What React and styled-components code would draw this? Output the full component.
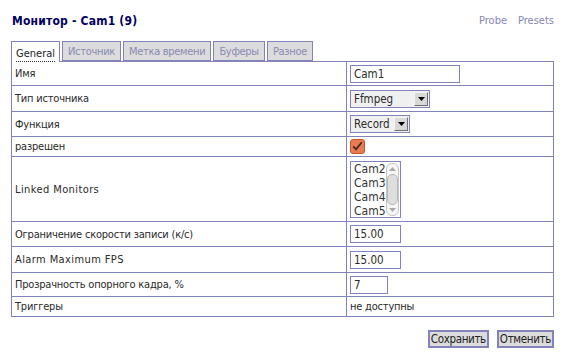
import React from 'react';
import styled, { createGlobalStyle } from 'styled-components';

const line = '#8282bc';
const isCyr = (s) => /[а-яё]/i.test(s);

const GlobalStyle = createGlobalStyle`
	body {
		margin: 0;
		background: white;
		font-family: 'DejaVu Sans Condensed', 'DejaVu Sans', sans-serif;
		font-stretch: condensed;
		font-size: 11px;
		color: #2a2a2a;
	}
`;

const rows = [
	{ label: 'Имя', kind: 'text', value: 'Cam1', width: 110, h: 24 },
	{ label: 'Тип источника', kind: 'select', value: 'Ffmpeg', width: 80, h: 26 },
	{ label: 'Функция', kind: 'select', value: 'Record', width: 60, h: 25 },
	{ label: 'разрешен', kind: 'check', h: 20 },
	{ label: 'Linked Monitors', kind: 'list', h: 65 },
	{ label: 'Ограничение скорости записи (к/с)', kind: 'text', value: '15.00', width: 51, h: 25 },
	{ label: 'Alarm Maximum FPS', kind: 'text', value: '15.00', width: 51, h: 26 },
	{ label: 'Прозрачность опорного кадра, %', kind: 'text', value: '7', width: 38, h: 24 },
	{ label: 'Триггеры', kind: 'plain', value: 'не доступны', h: 20 },
];

const tabs = ['General', 'Источник', 'Метка времени', 'Буферы', 'Разное'];

const Field = ({ row }) => {
	switch (row.kind) {
		case 'text':
			return <TextBox style={{ width: row.width }}>{row.value}</TextBox>;
		case 'select':
			return (
				<SelectBox style={{ width: row.width }}>
					<span>{row.value}</span>
					<Arrow>
						<svg width="7" height="4" viewBox="0 0 7 4">
							<path d="M0 0h7L3.5 4z" fill="#000" />
						</svg>
					</Arrow>
				</SelectBox>
			);
		case 'check':
			return (
				<svg width="15" height="15" viewBox="0 0 15 15">
					<rect x="0.5" y="0.5" width="14" height="14" rx="2.5" fill="#e97a52" stroke="#c4572f" />
					<path d="M3.2 7.3l2.8 3 5.8-7" fill="none" stroke="#4a2a20" strokeWidth="1.8" />
				</svg>
			);
		case 'list':
			return (
				<ListBox>
					<ListItems>
						{['Cam2', 'Cam3', 'Cam4', 'Cam5'].map((c) => (
							<ListItem key={c}>{c}</ListItem>
						))}
					</ListItems>
					<ScrollBar>
						<ScrollBtn>
							<svg width="7" height="4" viewBox="0 0 7 4">
								<path d="M0 4h7L3.5 0z" fill="#a8a8a8" />
							</svg>
						</ScrollBtn>
						<Thumb />
						<ScrollBtn>
							<svg width="7" height="4" viewBox="0 0 7 4">
								<path d="M0 0h7L3.5 4z" fill="#a8a8a8" />
							</svg>
						</ScrollBtn>
					</ScrollBar>
				</ListBox>
			);
		default:
			return <Plain>{row.value}</Plain>;
	}
};

const App = () => (
	<Page>
		<GlobalStyle />
		<Header>
			<Title>Монитор - Cam1 (9)</Title>
			<Links>
				<a>Probe</a>
				<a>Presets</a>
			</Links>
		</Header>
		<Tabs>
			{tabs.map((t, i) => (
				<Tab key={t} active={i === 0} cyr={isCyr(t)}>
					<span>{t}</span>
				</Tab>
			))}
		</Tabs>
		<Table>
			<tbody>
				{rows.map((r) => (
					<tr key={r.label} style={{ height: r.h }}>
						<LabelCell cyr={isCyr(r.label)}>{r.label}</LabelCell>
						<ValueCell>
							<Field row={r} />
						</ValueCell>
					</tr>
				))}
			</tbody>
		</Table>
		<Buttons>
			<Button>Сохранить</Button>
			<Button>Отменить</Button>
		</Buttons>
	</Page>
);

const Page = styled.div`
	width: 565px;
	height: 352px;
	padding: 0 11px;
	box-sizing: border-box;
`;

const Header = styled.div`
	display: flex;
	justify-content: space-between;
	align-items: center;
	height: 40px;
	padding: 1px 0 0 1px;
	box-sizing: border-box;
`;

const Title = styled.div`
	font-weight: bold;
	font-size: 12px;
	color: #00005e;
	letter-spacing: 0.2px;
`;

const Links = styled.div`
	display: flex;
	gap: 11px;
	font-size: 11px;
	a {
		color: #8585b5;
	}
`;

const Tabs = styled.div`
	display: flex;
	gap: 2px;
	height: 21px;
	align-items: flex-end;
`;

const Tab = styled.div`
	height: ${({ active }) => (active ? '21px' : '20px')};
	box-sizing: border-box;
	display: flex;
	align-items: center;
	padding: 0 ${({ active }) => (active ? '4px' : '5px')};
	border: 1px solid ${line};
	border-bottom: ${({ active }) => (active ? 'none' : `1px solid ${line}`)};
	background: ${({ active }) => (active ? 'white' : '#dcdcdc')};
	color: ${({ active }) => (active ? '#222' : '#8a8ab4')};
	margin-bottom: ${({ active }) => (active ? '-1px' : '0')};
	letter-spacing: ${({ cyr }) => (cyr ? '-0.3px' : '0')};
	span {
		border-bottom: ${({ active }) => (active ? '1px dotted #333' : 'none')};
		padding: 2px 0 1px;
		margin-top: ${({ active }) => (active ? '2px' : '0')};
	}
`;

const Table = styled.table`
	width: 543px;
	border-collapse: collapse;
	td {
		border: 1px solid ${line};
		padding: 0 3px;
		vertical-align: middle;
	}
`;

const LabelCell = styled.td`
	width: 328px;
	letter-spacing: ${({ cyr }) => (cyr ? '-0.2px' : '0.4px')};
`;

const ValueCell = styled.td`
	svg {
		display: block;
	}
`;

const Plain = styled.span`
	letter-spacing: -0.2px;
`;

const TextBox = styled.div`
	height: 18px;
	box-sizing: border-box;
	border: 1px solid ${line};
	padding: 0 3px;
	line-height: 16px;
	font-size: 11.5px;
`;

const SelectBox = styled.div`
	height: 18px;
	box-sizing: border-box;
	border: 1px solid ${line};
	background: #f0f0f0;
	display: flex;
	align-items: center;
	justify-content: space-between;
	padding-left: 3px;
	font-size: 11.5px;
`;

const Arrow = styled.div`
	width: 14px;
	height: 14px;
	margin-right: 1px;
	box-sizing: border-box;
	background: #d8d8d8;
	border: 1px solid;
	border-color: #f4f4f4 #707070 #707070 #f4f4f4;
	display: flex;
	align-items: center;
	justify-content: center;
`;

const ListBox = styled.div`
	width: 51px;
	height: 57px;
	box-sizing: border-box;
	border: 1px solid ${line};
	display: flex;
	margin: 3px 0;
`;

const ListItems = styled.div`
	flex: 1;
	padding: 0 0 0 3px;
	font-size: 12px;
	color: #333;
`;

const ListItem = styled.div`
	height: 14px;
	line-height: 14px;
`;

const ScrollBar = styled.div`
	width: 13px;
	margin: 1px 1px 1px 0;
	box-sizing: border-box;
	border: 1px solid #c4c4c4;
	border-radius: 6px;
	background: #f6f6f6;
	display: flex;
	flex-direction: column;
	align-items: center;
`;

const ScrollBtn = styled.div`
	height: 10px;
	display: flex;
	align-items: center;
	justify-content: center;
`;

const Thumb = styled.div`
	flex: 1;
	width: 11px;
	box-sizing: border-box;
	border: 1px solid #b8b8b8;
	border-radius: 5px;
	background: #dedede;
`;

const Buttons = styled.div`
	display: flex;
	justify-content: flex-end;
	gap: 8px;
	margin-top: 13px;
`;

const Button = styled.button`
	font-family: inherit;
	font-stretch: condensed;
	font-size: 11.5px;
	letter-spacing: -0.35px;
	color: #222;
	background: #dcdcdc;
	border: 2px solid ${line};
	height: 18px;
	padding: 0 1px;
	line-height: 14px;
`;

export default App;
